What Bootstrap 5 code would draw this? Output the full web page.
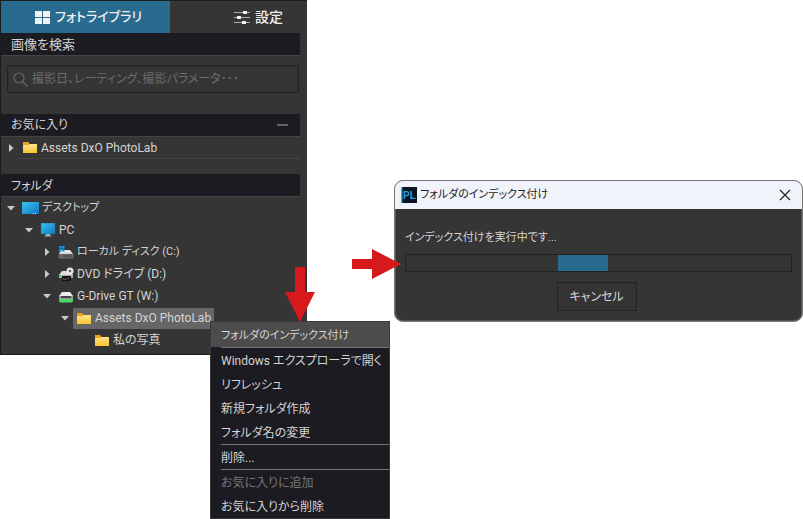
<!DOCTYPE html>
<html lang="ja">
<head>
<meta charset="utf-8">
<meta name="viewport" content="width=device-width, initial-scale=1">
<title>フォルダのインデックス付け</title>
<link rel="stylesheet" href="https://cdn.jsdelivr.net/npm/bootstrap@5.3.0/dist/css/bootstrap.min.css">
<style>
body{background:#fff;color:#d4d4d4;font-family:Roboto,"Noto Sans CJK JP",sans-serif;font-size:12px;line-height:20px;font-feature-settings:"palt"}
button,input{font:inherit;font-feature-settings:inherit;color:inherit}
.plain{background:none;border:0;padding:0}
.kana{font-size:11px}
.scene{display:grid;grid-template-columns:307fr 87fr 409fr;align-items:start}
.library{background:#353535;border:1px solid #1c1c1c;border-right:0;padding-bottom:3px}
.tabs{display:grid;grid-template-columns:169fr 137fr;height:32px;font-size:13px;font-weight:500}
.tabs button{border:0;color:#eee;background:none;gap:5px}
.tabs .picked{background:#286b8f;padding-left:12px}
.tabs .setup{padding-left:46px;font-size:14px}
.heading{background:#1c1b21;height:22px;margin:0 7px 1px 0;padding:0 12px 0 10px;font-size:12px;font-weight:400;line-height:24px;box-shadow:0 1px #444}
.heading label{font-size:13px}
.dash{width:11px;height:2px;background:#626262}
.search{height:28px;margin:10px 8px 21px 6px;border:1px solid #222;border-radius:2px;box-shadow:inset 0 0 0 1px #303030;padding:0 5px;gap:4px}
.search input{color:#aaa;background:none;border:0;outline:0;padding:0;min-width:0}
.search input::placeholder{color:#6d6d6d;opacity:1}
.tree ul{padding-left:18px}
.node{height:22px;padding-left:1px}
.fold{width:17px;height:20px}
.entry{gap:3px;padding:0 3px;height:21px;white-space:nowrap}
.entry svg{flex:none}
.chosen{background:#666}
.favs{margin:0 7px 15px 0}
.favs .node{height:21px}
.favs::after{content:"";display:block;height:1px;margin-left:18px;background:#444}
.dialogbox{margin-top:180px;background:#353535;border:1px solid #777;border-radius:9px;overflow:hidden;box-shadow:inset 0 0 0 1px #555}
.titlebar{background:#f0f3fa;color:#222;height:28px;padding:0 11px 0 6px;gap:3px}
.dialogbody{padding:19px 10px 10px}
.track{height:18px;border:1px solid #222;background:#343434;margin:6px 0 10px}
.track span{display:block;height:16px;background:#286b8f}
.cancel{width:80px;height:29px;background:#343434;border:1px solid #222}
.popup{position:absolute;left:210px;top:321px;width:180px;background:#1c1b21;border:1px solid #3a3a3a;z-index:2}
.popup button{display:block;width:100%;height:24px;text-align:left;padding-left:10px;line-height:26px;white-space:nowrap}
.popup .hot{background:#4c4c4c;height:25px;line-height:28px}
.popup hr{margin:0 0 0 10px;border:0;height:1px;background:#777;opacity:1}
.popup button:disabled{color:#777}
.arrow{position:absolute;z-index:3}
.down{left:285px;top:267px}
.right{left:352px;top:249px}
</style>
<script src="https://cdn.jsdelivr.net/npm/bootstrap@5.3.0/dist/js/bootstrap.bundle.min.js"></script>
</head>
<body>
<svg width="0" height="0" class="position-absolute" aria-hidden="true">
<defs>
<linearGradient id="gold" x2="0" y2="1"><stop stop-color="#ffe391"/><stop offset="1" stop-color="#fbc42d"/></linearGradient>
<linearGradient id="screen" x2="1" y2="1"><stop stop-color="#36c8ee"/><stop offset="1" stop-color="#1273c4"/></linearGradient>
<symbol id="folder" viewBox="0 0 16 13"><path d="M1 1h5l2 2h6.500q.5 0 .5.500V7H1z" fill="#e9a51d"/><path d="M1 4h5.500L8 3h7v9H1z" fill="url(#gold)"/></symbol>
<symbol id="shut" viewBox="0 0 8 8"><path d="M2 0v8l4.500-4z" fill="#c8c8c8"/></symbol>
<symbol id="open" viewBox="0 0 8 8"><path d="M0 2h8L4 6.500z" fill="#c8c8c8"/></symbol>
</defs>
</svg>
<main class="scene position-relative min-vh-100">
<aside class="library">
<div class="tabs">
<button type="button" class="picked d-flex align-items-center justify-content-center"><svg width="15" height="13" viewBox="0 0 15 13" fill="#f2f2f2"><path d="M0 0h7v6H0zM8 0h7v6H8zM0 7h7v6H0zM8 7h7v6H8z"/></svg>フォトライブラリ</button>
<button type="button" class="setup d-flex align-items-center justify-content-center"><svg width="16" height="15" viewBox="0 0 16 15"><path d="M0 2.500h16M0 7.500h16M0 12.500h16" stroke="#aaa"/><path d="M9 1h4v3H9zM3 6h4v3H3zM8 11h4v3H8z" fill="#f2f2f2"/></svg>設定</button>
</div>
<h2 class="heading"><label for="find">画像を検索</label></h2>
<div class="search d-flex align-items-center"><svg width="15" height="15" viewBox="0 0 15 15" fill="none" stroke="#666" stroke-width="1.200"><circle cx="6" cy="6" r="5"/><path d="M9.500 9.500l5 5"/></svg><input id="find" class="flex-grow-1" type="text" placeholder="撮影日、レーティング、撮影パラメータ･･･"></div>
<h2 class="heading d-flex justify-content-between align-items-center">お気に入り<button type="button" class="plain dash" aria-label="折りたたむ"></button></h2>
<div class="favs"><div class="node d-flex align-items-center"><button type="button" class="plain fold d-flex align-items-center justify-content-center" aria-label="展開"><svg width="8" height="8"><use href="#shut"/></svg></button><button type="button" class="plain entry d-flex align-items-center"><svg width="16" height="13"><use href="#folder"/></svg>Assets DxO PhotoLab</button></div></div>
<h2 class="heading">フォルダ</h2>
<nav class="tree" aria-label="フォルダ">
<div class="node d-flex align-items-center"><button type="button" class="plain fold d-flex align-items-center justify-content-center" aria-label="折りたたむ"><svg width="8" height="8"><use href="#open"/></svg></button><button type="button" class="plain entry kana d-flex align-items-center"><svg width="17" height="13" viewBox="0 0 17 13"><path d="M0 0h17v12H0z" fill="url(#screen)"/><path d="M11 11h1v1h-1zM13 11h1v1h-1z" fill="#bce6fa"/></svg>デスクトップ</button></div>
<ul class="list-unstyled mb-0">
<li><div class="node d-flex align-items-center"><button type="button" class="plain fold d-flex align-items-center justify-content-center" aria-label="折りたたむ"><svg width="8" height="8"><use href="#open"/></svg></button><button type="button" class="plain entry d-flex align-items-center"><svg width="16" height="14" viewBox="0 0 16 14"><path d="M1 0h14v11H1z" fill="url(#screen)" stroke="#28688a" stroke-width=".5"/><path d="M6 11h4v1.500h1.500v1h-7v-1H6z" fill="#aab4b9"/></svg>PC</button></div>
<ul class="list-unstyled mb-0">
<li class="node d-flex align-items-center"><button type="button" class="plain fold d-flex align-items-center justify-content-center" aria-label="展開"><svg width="8" height="8"><use href="#shut"/></svg></button><button type="button" class="plain entry kana d-flex align-items-center"><svg width="16" height="15" viewBox="0 0 16 15"><path d="M3 5h9l3 4H1z" fill="#e6e6e6"/><rect x="1" y="9" width="14" height="4" rx="1" fill="#505050" stroke="#9b9b9b" stroke-width=".6"/><path d="M3 10h1v2H3z" fill="#35d353"/><path d="M1 1h2.500v2.500H1zM4 1h2.500v2.500H4zM1 4h2.500v2.500H1zM4 4h2.500v2.500H4z" fill="#109be8"/></svg>ローカル ディスク (C:)</button></li>
<li class="node d-flex align-items-center"><button type="button" class="plain fold d-flex align-items-center justify-content-center" aria-label="展開"><svg width="8" height="8"><use href="#shut"/></svg></button><button type="button" class="plain entry d-flex align-items-center"><svg width="16" height="15" viewBox="0 0 16 15"><path d="M4 4h8l3 4H1z" fill="#dedede"/><circle cx="12" cy="4" r="3.500" fill="#e8e8e8"/><circle cx="12" cy="4" r="1.200" fill="#555"/><path d="M1 8h14v3H1z" fill="#aaa"/><path d="M2 8h1v2H2z" fill="#35d353"/><rect x="4" y="9" width="9" height="5" rx="1" fill="#111"/><path d="M5.500 11v1.500h2V11M9 11v1.500M10 12.500V11h1.500" stroke="#bbb" stroke-width=".4" fill="none"/></svg>DVD ドライブ (D:)</button></li>
<li><div class="node d-flex align-items-center"><button type="button" class="plain fold d-flex align-items-center justify-content-center" aria-label="折りたたむ"><svg width="8" height="8"><use href="#open"/></svg></button><button type="button" class="plain entry d-flex align-items-center"><svg width="16" height="13" viewBox="0 0 16 13"><path d="M4 2h8l3 4H1z" fill="#ececec"/><path d="M1 6h14v3H1z" fill="#999"/><path d="M3 6h10v2H3z" fill="#444"/><path d="M1 9h14v2l-1 1.500H2L1 11z" fill="#4fd66b"/></svg>G-Drive GT (W:)</button></div>
<ul class="list-unstyled mb-0">
<li><div class="node d-flex align-items-center"><button type="button" class="plain fold d-flex align-items-center justify-content-center" aria-label="折りたたむ"><svg width="8" height="8"><use href="#open"/></svg></button><button type="button" class="plain entry chosen d-flex align-items-center"><svg width="16" height="13"><use href="#folder"/></svg>Assets DxO PhotoLab</button></div>
<ul class="list-unstyled mb-0"><li class="node d-flex align-items-center"><span class="fold"></span><button type="button" class="plain entry d-flex align-items-center"><svg width="16" height="13"><use href="#folder"/></svg>私の写真</button></li></ul>
</li></ul>
</li></ul>
</li></ul>
</nav>
</aside>
<span></span>
<section class="dialogbox" role="dialog" aria-labelledby="dialogname">
<header class="titlebar d-flex align-items-center"><svg width="16" height="16" viewBox="0 0 16 16"><path d="M0 0h16v16H0z" fill="#081422"/><path d="M0 0h1.500v16H0z" fill="#28a9f4"/><text x="2" y="12" font-family="Liberation Sans" font-size="10" font-weight="bold" fill="#2b9fda">PL</text></svg><span id="dialogname" class="flex-grow-1 kana">フォルダのインデックス付け</span><button type="button" class="plain d-flex" aria-label="閉じる"><svg width="12" height="12" viewBox="0 0 12 12" stroke="#222" stroke-width="1.200"><path d="M1 1l10 10M11 1L1 11"/></svg></button></header>
<div class="dialogbody"><div id="status" class="kana">インデックス付けを実行中です...</div>
<div class="track" role="progressbar" aria-labelledby="status"><span style="width:13%;margin-left:39.5%"></span></div>
<div class="text-center pe-1"><button type="button" class="cancel">キャンセル</button></div></div>
</section>
<div class="popup" role="menu">
<button type="button" role="menuitem" class="plain hot kana">フォルダのインデックス付け</button><hr>
<button type="button" role="menuitem" class="plain">Windows エクスプローラで開く</button>
<button type="button" role="menuitem" class="plain">リフレッシュ</button>
<button type="button" role="menuitem" class="plain">新規フォルダ作成</button>
<button type="button" role="menuitem" class="plain">フォルダ名の変更</button><hr>
<button type="button" role="menuitem" class="plain">削除...</button><hr>
<button type="button" role="menuitem" class="plain" disabled>お気に入りに追加</button>
<button type="button" role="menuitem" class="plain">お気に入りから削除</button>
</div>
<svg class="arrow down" width="30" height="55" viewBox="0 0 30 55" fill="#d7191c"><path d="M10 0h10v25h10L15 55 0 25h10z"/></svg>
<svg class="arrow right" width="49" height="30" viewBox="0 0 49 30" fill="#d7191c"><path d="M0 10h20V0l29 15-29 15V20H0z"/></svg>
</main>
</body>
</html>
